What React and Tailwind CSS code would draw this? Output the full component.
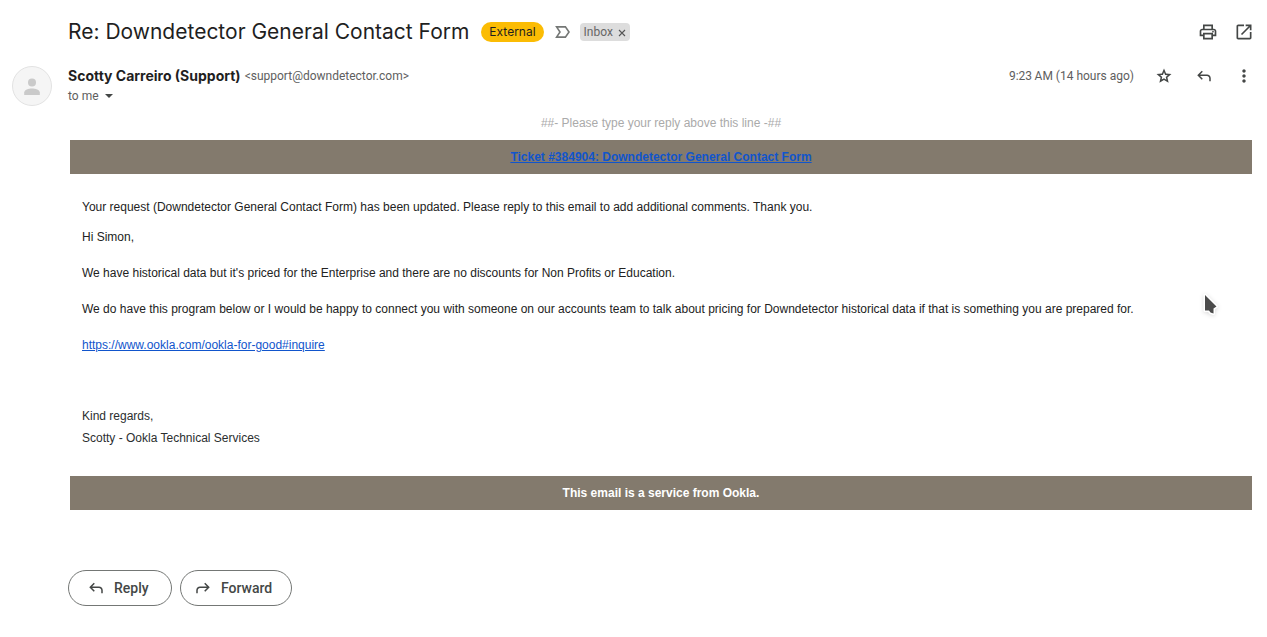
const paths = {
  print:
    'M640-640v-120H320v120h-80v-200h480v200h-80Zm-480 80h640-640Zm560 100q17 0 28.5-11.5T760-500q0-17-11.5-28.5T720-540q-17 0-28.5 11.5T680-500q0 17 11.5 28.5T720-460Zm-80 260v-160H320v160h320Zm80 80H240v-160H80v-240q0-51 35-85.5t85-34.5h560q51 0 85.5 34.5T880-520v240H720v160Zm80-240v-160q0-17-11.5-28.5T760-560H200q-17 0-28.5 11.5T160-520v160h80v-80h480v80h80Z',
  open: 'M200-120q-33 0-56.5-23.5T120-200v-560q0-33 23.5-56.5T200-840h280v80H200v560h560v-280h80v280q0 33-23.5 56.5T760-120H200Zm188-212-56-56 372-372H560v-80h280v280h-80v-144L388-332Z',
  star: 'm354-287 126-76 126 77-33-144 111-96-146-13-58-136-58 135-146 13 111 97-33 143ZM233-120l65-281L80-590l288-25 112-265 112 265 288 25-218 189 65 281-247-149-247 149Z',
  reply:
    'M760-200v-160q0-50-35-85t-85-35H273l144 144-57 56-240-240 240-240 57 56-144 144h367q83 0 141.5 58.5T840-360v160h-80Z',
  more: 'M480-160q-33 0-56.5-23.5T400-240q0-33 23.5-56.5T480-320q33 0 56.5 23.5T560-240q0 33-23.5 56.5T480-160Zm0-240q-33 0-56.5-23.5T400-480q0-33 23.5-56.5T480-560q33 0 56.5 23.5T560-480q0 33-23.5 56.5T480-400Zm0-240q-33 0-56.5-23.5T400-720q0-33 23.5-56.5T480-800q33 0 56.5 23.5T560-720q0 33-23.5 56.5T480-640Z',
};

function Icon({ name, className = 'size-[18px]' }) {
  return (
    <svg viewBox="0 -960 960 960" fill="currentColor" aria-hidden="true" className={className}>
      <path d={paths[name]} />
    </svg>
  );
}

function IconButton({ name, label, iconClass = 'size-5' }) {
  return (
    <button type="button" aria-label={label} className="flex size-5 items-center justify-center text-[#444746]">
      <Icon name={name} className={iconClass} />
    </button>
  );
}

function Header() {
  return (
    <div className="flex h-16 items-center justify-between pr-[13px] pl-[68px]">
      <div className="flex items-center">
        <h1 className="font-[Inter,sans-serif] text-[21px] leading-7 text-[#1f1f1f]">
          Re: Downdetector General Contact Form
        </h1>
        <span className="ml-3 flex h-5 items-center rounded-full bg-[#fbbc04] px-2 font-[Inter,sans-serif] text-xs text-[#1f1f1f]">
          External
        </span>
        <button type="button" aria-label="Mark as important" className="ml-[11px]">
          <svg viewBox="0 0 16 12" fill="none" stroke="#747775" strokeWidth="1.6" className="h-3 w-4">
            <path d="M1.6 .9H10.4L14 6L10.4 11.1H1.6L5 6Z" />
          </svg>
        </button>
        <span className="ml-[9px] flex h-[18px] items-center gap-[5px] rounded bg-[#ddd] px-1 text-xs text-[#666]">
          Inbox
          <button type="button" aria-label="Remove label Inbox">
            <svg viewBox="0 0 8 8" stroke="#555" strokeWidth="1.1" className="mt-0.5 size-2">
              <path d="M1 1L7 7M7 1L1 7" />
            </svg>
          </button>
        </span>
      </div>
      <div className="flex gap-4">
        <IconButton name="print" label="Print all" />
        <IconButton name="open" label="In new window" />
      </div>
    </div>
  );
}

function Sender() {
  return (
    <div className="flex pr-[13px] pl-3">
      <svg viewBox="0 0 40 40" aria-label="Sender avatar" role="img" className="mt-0.5 size-10 shrink-0">
        <circle cx="20" cy="20" r="19.5" fill="#f5f5f5" stroke="#e2e2e2" />
        <circle cx="20" cy="16.5" r="4" fill="#cacaca" />
        <path d="M12.2 29V26.5C12.2 23.8 16.6 22.4 20 22.4S27.8 23.8 27.8 26.5V29Z" fill="#cacaca" />
      </svg>
      <div className="ml-4 grow">
        <div className="flex h-6 items-center justify-between">
          <div className="flex items-center gap-1">
            <span className="font-[Inter,sans-serif] text-sm font-bold text-[#1f1f1f]">
              Scotty Carreiro (Support)
            </span>
            <span className="text-xs text-[#5e5e5e]">&lt;support@downdetector.com&gt;</span>
          </div>
          <div className="flex items-center gap-5">
            <span className="text-xs text-[#5e5e5e]">9:23{'\u2009'}AM (14 hours ago)</span>
            <IconButton name="star" label="Not starred" iconClass="size-[18px]" />
            <IconButton name="reply" label="Reply to sender" iconClass="size-[18px]" />
            <IconButton name="more" label="More message options" />
          </div>
        </div>
        <button type="button" aria-label="to me, show details" className="flex h-4 items-center gap-1.5 text-xs text-[#5e5e5e]">
          to me
          <svg viewBox="0 0 8 4" fill="#444746" className="h-1 w-2">
            <path d="M0 0H8L4 4Z" />
          </svg>
        </button>
      </div>
    </div>
  );
}

function Message() {
  return (
    <div className="mr-[15px] ml-[70px] font-['Liberation_Sans',Arial,sans-serif] text-xs leading-[18px] text-[#222]">
      <p className="mt-2 text-center text-[#aaa]">##- Please type your reply above this line -##</p>
      <div className="mt-2 bg-[#837a6d] p-2 text-center font-bold">
        <a href="#ticket" className="text-[#1155cc] underline">
          Ticket #384904: Downdetector General Contact Form
        </a>
      </div>
      <div className="px-3 pt-6 pb-[27px]">
        <p>
          Your request (Downdetector General Contact Form) has been updated. Please reply to this email to add
          additional comments. Thank you.
        </p>
        <div className="mt-3 flex flex-col gap-[18px]">
          <p>Hi Simon,</p>
          <p>We have historical data but it's priced for the Enterprise and there are no discounts for Non Profits or Education.</p>
          <p>
            We do have this program below or I would be happy to connect you with someone on our accounts team to talk
            about pricing for Downdetector historical data if that is something you are prepared for.
          </p>
          <p>
            <a href="https://www.ookla.com/ookla-for-good#inquire" className="text-[#1155cc] underline">
              https://www.ookla.com/ookla-for-good#inquire
            </a>
          </p>
        </div>
        <p className="mt-[51px] leading-[22px] text-[#2b2e2f]">
          Kind regards,
          <br />
          Scotty - Ookla Technical Services
        </p>
      </div>
      <div className="bg-[#837a6d] p-2 text-center font-bold text-white">This email is a service from Ookla.</div>
    </div>
  );
}

function Actions() {
  const button =
    'flex h-9 items-center gap-[9px] rounded-full border border-[#747775] text-sm font-medium text-[#444746]';
  return (
    <div className="mt-[60px] flex gap-2 pl-[68px]">
      <button type="button" className={`${button} w-[104px] pl-[18px]`}>
        <Icon name="reply" />
        Reply
      </button>
      <button type="button" className={`${button} w-[112px] pl-[13px]`}>
        <Icon name="reply" className="size-[18px] -scale-x-100" />
        Forward
      </button>
    </div>
  );
}

export default function App() {
  return (
    <main className="relative min-h-screen bg-white pb-8 font-[Roboto,sans-serif]">
      <Header />
      <Sender />
      <Message />
      <Actions />
      <svg viewBox="0 0 20 26" aria-hidden="true" className="absolute top-[291px] right-[46px] h-[26px] w-5 drop-shadow-sm">
        <path d="M4 4L15.5 15.5L12.5 17.5V22.5L9.5 21.5L8 19.5H4Z" fill="#fff" stroke="#fff" strokeWidth="3" strokeLinejoin="round" />
        <path d="M4 4L15.5 15.5L12.5 17.5V22.5L9.5 21.5L8 19.5H4Z" fill="#4a4a4a" />
      </svg>
    </main>
  );
}
